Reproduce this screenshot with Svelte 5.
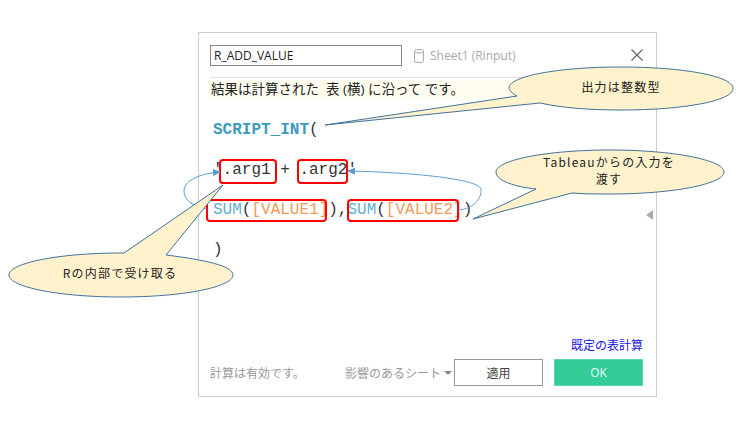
<script lang="ts">
    const sheet = "Sheet1 (Rinput)";
</script>

<div class="page">
    <div class="dialog">
        <div class="head">
            <input class="name" type="text" value="R_ADD_VALUE" />
            <svg class="db" width="12" height="16" viewBox="0 0 12 16">
                <rect x="1.5" y="1.5" width="9" height="13" rx="2" fill="none" stroke="#aaa" />
                <path d="M1.5 4c2 1.400 7 1.400 9 0" fill="none" stroke="#aaa" />
            </svg>
            <span class="sheet">{sheet}</span>
            <svg class="close" width="14" height="14" viewBox="0 0 14 14">
                <path d="M1.500 1.500l11 11M12.500 1.500l-11 11" stroke="#666" stroke-width="1.200" />
            </svg>
        </div>
        <div class="status">結果は計算された&nbsp; 表 (横) に沿って です。</div>
        <div class="code">
            <div class="line"><b class="fn">SCRIPT_INT</b>(</div>
            <div class="line"></div>
            <div class="line">'.arg1 + .arg2'</div>
            <div class="line"></div>
            <div class="line"><span class="sum">SUM</span>(<span class="field">[VALUE1]</span>),<span class="sum">SUM</span>(<span class="field">[VALUE2]</span>)</div>
            <div class="line"></div>
            <div class="line">)</div>
        </div>
        <span class="collapse"></span>
        <div class="bottom">
            <div class="link-row"><span class="link">既定の表計算</span></div>
            <div class="foot">
                <span class="valid">計算は有効です。</span>
                <span class="affected">影響のあるシート<i class="caret"></i></span>
                <button class="apply">適用</button>
                <button class="ok">OK</button>
            </div>
        </div>
    </div>

    <!-- annotations drawn over the screenshot -->
    <svg class="notes" width="754" height="434" viewBox="0 0 754 434">
        <defs>
            <marker id="head" markerWidth="8" markerHeight="8" refX="7" refY="4" orient="auto" markerUnits="userSpaceOnUse">
                <path d="M0 0.500L8 4L0 7.500z" fill="#5b9bd5" />
            </marker>
        </defs>

        <g fill="none" stroke="#f00" stroke-width="2">
            <rect x="220" y="160" width="56" height="23" rx="3" />
            <rect x="298" y="160" width="49" height="23" rx="3" />
            <rect x="207" y="200" width="119" height="21" rx="3" />
            <rect x="348" y="200" width="110" height="21" rx="3" />
        </g>

        <g fill="none" stroke="#5b9bd5" stroke-width="1">
            <path d="M207 209C192 206 184 200 184 191C184 179 204 173 220 172" marker-end="url(#head)" />
            <path d="M458 210C474 209 482 198 481 189C478 178 402 172 348 171" marker-end="url(#head)" />
        </g>

        <g fill="#fff2cc" stroke="#41719c" stroke-width="1">
            <path d="M325 125L517 96C509 92 509 88 509 88C509 76 559 67 621 67C683 67 733 76 733 88.500C733 101 683 110 621 110C590 110 563 108 540 103z" />
            <path d="M473 219L536 189C516 187 496 181 496 172C496 160 547 150 610 150C673 150 724 160 724 172C724 184 673 194 610 194C596 194 584 194 572 193z" />
            <path d="M223 185L166 255C206 260 233 266 233 275C233 287 183 297 121 297C59 297 9 287 9 275C9 263 59 253 121 253L124 253z" />
        </g>

        <g class="label">
            <text x="621" y="92">出力は整数型</text>
            <text x="609" y="167">Tableauからの入力を</text>
            <text x="609" y="184">渡す</text>
            <text x="120" y="278">Rの内部で受け取る</text>
        </g>
    </svg>
</div>

<style>
    :global(body) {
        margin: 0;
        background: #fff;
    }

    .page {
        position: relative;
        width: 754px;
        height: 434px;
        padding: 32px 0 0 198px;
        box-sizing: border-box;
        overflow: hidden;
        font-family: "Open Sans", "Noto Sans CJK JP", sans-serif;
    }

    .dialog {
        position: relative;
        width: 459px;
        height: 365px;
        box-sizing: border-box;
        border: 1px solid #ccc;
        display: flex;
        flex-direction: column;
        padding: 12px 0 0 11px;
    }

    .head {
        display: flex;
        align-items: center;
        height: 21px;
        padding-bottom: 11px;
        border-bottom: 1px solid #ddd;
    }

    .name {
        width: 192px;
        height: 21px;
        box-sizing: border-box;
        border: 1px solid #888;
        padding: 0 3px;
        font: 12px "Open Sans", sans-serif;
        color: #222;
        outline: none;
    }

    .db {
        margin-left: 11px;
    }

    .sheet {
        margin-left: 5px;
        font-size: 12px;
        color: #aaa;
    }

    .close {
        margin-left: auto;
        margin-right: 12px;
        margin-bottom: 1px;
    }

    .status {
        margin-top: 1px;
        height: 20px;
        line-height: 20px;
        font-size: 13.500px;
        color: #222;
        background: #fffdf0;
        padding-left: 1px;
        white-space: nowrap;
    }

    .code {
        margin-top: 21px;
        margin-left: 3px;
        font: 16px/20px "Liberation Mono", monospace;
        color: #333;
    }

    .line {
        height: 20px;
        white-space: pre;
    }

    .fn {
        color: #3a9cbc;
    }

    .sum {
        color: #5fb2d0;
    }

    .field {
        color: #f29a58;
    }

    .collapse {
        position: absolute;
        right: 3px;
        top: 177px;
        border: 5px solid transparent;
        border-left: 0;
        border-right: 7px solid #aaa;
    }

    .bottom {
        margin-top: auto;
        padding: 0 12px 10px 0;
    }

    .link-row {
        display: flex;
        justify-content: flex-end;
        margin-bottom: 5px;
        padding-right: 1px;
    }

    .link {
        font-size: 12px;
        line-height: 16px;
        color: #1414e0;
    }

    .foot {
        display: flex;
        align-items: center;
        font-size: 12px;
        color: #999;
    }

    .valid {
        width: 135px;
    }

    .affected {
        width: 109px;
        display: flex;
        align-items: center;
        white-space: nowrap;
    }

    .caret {
        margin-left: 3px;
        border: 4px solid transparent;
        border-top: 4px solid #888;
        border-bottom: 0;
    }

    button {
        width: 89px;
        height: 27px;
        padding: 0;
        font: 12px "Open Sans", "Noto Sans CJK JP", sans-serif;
        box-sizing: border-box;
    }

    .apply {
        background: #fff;
        border: 1px solid #999;
        color: #444;
    }

    .ok {
        margin-left: 11px;
        background: #33cc99;
        border: 1px solid #5fd9b0;
        color: #e8fff6;
    }

    .notes {
        position: absolute;
        left: 0;
        top: 0;
    }

    .label text {
        font-family: "Noto Sans CJK JP", sans-serif;
        font-size: 12px;
        letter-spacing: 1.200px;
        fill: #222;
        text-anchor: middle;
    }
</style>
